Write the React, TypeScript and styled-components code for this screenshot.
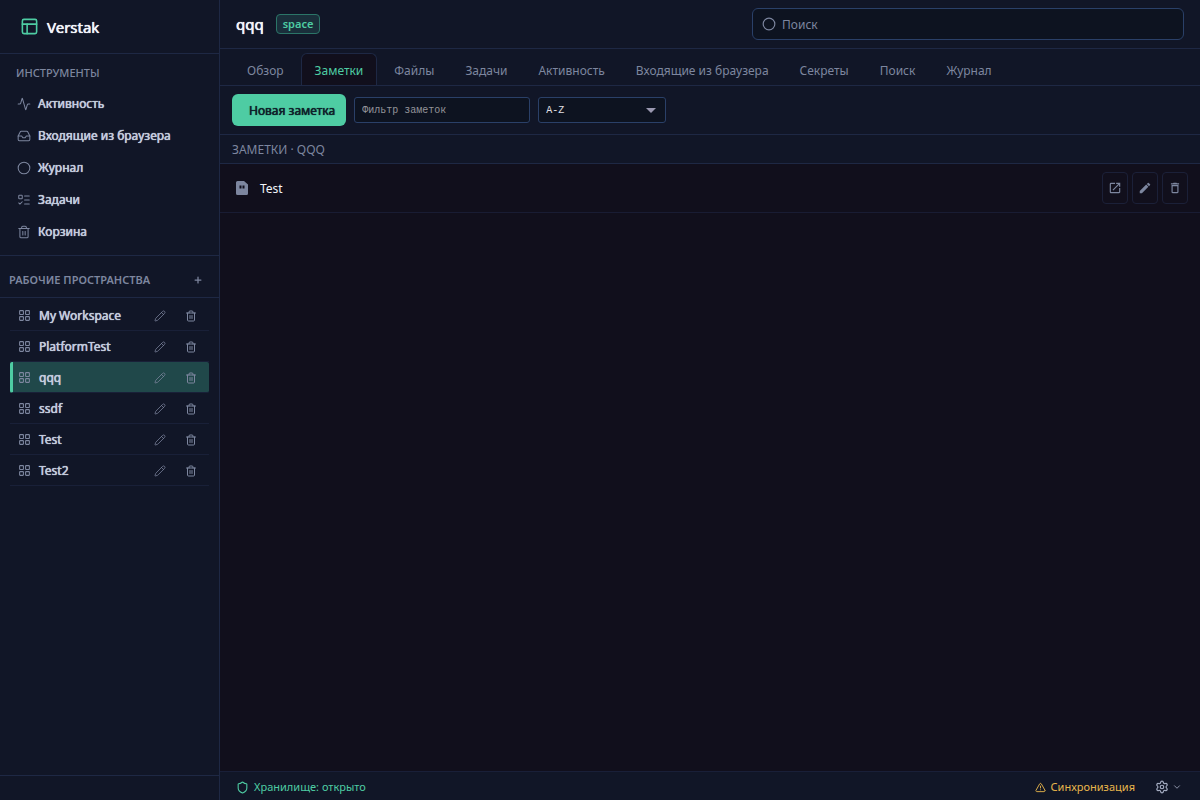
import React from "react";
import styled, { createGlobalStyle, css } from "styled-components";
import {
  Activity, Inbox, Circle, ListTodo, Trash2, LayoutGrid, Pencil, PanelsTopLeft,
  Shield, TriangleAlert, Settings, ChevronDown, Plus,
} from "lucide-react";
import { MdOpenInNew, MdEdit, MdDeleteOutline } from "react-icons/md";

const color = {
  panel: "#111627",
  canvas: "#110f1c",
  field: "#0d1320",
  line: "#1e2844",
  fieldLine: "#2a4068",
  text: "#c3cbdd",
  bright: "#f2f5fa",
  muted: "#7d869f",
  accent: "#4ecca3",
  warn: "#e8b64c",
};

const strong = css`
  font-weight: 400;
  text-shadow: 0 0 0 currentColor, 0 0 1px currentColor;
`;

const GlobalStyle = createGlobalStyle`
  *, *::before, *::after { box-sizing: border-box; }
  body {
    margin: 0;
    background: ${color.canvas};
    color: ${color.text};
    font-family: "Noto Sans", "Open Sans", sans-serif;
    font-size: 12px;
    line-height: 16px;
  }
  button, input, select { font: inherit; color: inherit; margin: 0; }
  ul { list-style: none; margin: 0; padding: 0; }
  h1, h2 { margin: 0; }
`;

const Shell = styled.div`
  display: grid;
  grid-template-columns: 220px minmax(0, 1fr);
  min-height: 100vh;
`;

const Sidebar = styled.aside`
  display: flex;
  flex-direction: column;
  background: ${color.panel};
  border-right: 1px solid ${color.line};
`;

const Brand = styled.div`
  ${strong}
  display: flex;
  align-items: center;
  gap: 8px;
  height: 54px;
  padding: 0 20px;
  border-bottom: 1px solid ${color.line};
  color: ${color.bright};
  font-size: 15px;
  svg { color: ${color.accent}; }
`;

const Tools = styled.nav`
  padding: 10px 0 7px;
  border-bottom: 1px solid ${color.line};
`;

const SectionTitle = styled.h2`
  font-size: 11px;
  font-weight: 600;
  line-height: 18px;
  color: ${color.muted};
  text-transform: uppercase;
`;

const ToolsTitle = styled(SectionTitle)`
  padding: 0 16px;
  margin-bottom: 6px;
  font-weight: 500;
`;

const ToolLink = styled.a`
  ${strong}
  display: flex;
  align-items: center;
  gap: 7px;
  height: 32px;
  padding: 0 17px;
  color: ${color.text};
  text-decoration: none;
  svg { color: ${color.muted}; }
`;

const SpacesHeader = styled.div`
  display: flex;
  align-items: center;
  justify-content: space-between;
  height: 42px;
  padding: 6px 10px 0 9px;
  border-bottom: 1px solid ${color.line};
`;

const GhostButton = styled.button`
  display: grid;
  place-items: center;
  width: 22px;
  height: 22px;
  padding: 0;
  border: 0;
  background: none;
  color: ${color.muted};
`;

const SpaceList = styled.ul`
  flex: 1;
  padding: 2px 10px;
`;

const SpaceRow = styled.li<{ $active: boolean }>`
  display: flex;
  align-items: center;
  gap: 9px;
  height: 31px;
  padding: 1px 7px 0 3px;
  border-bottom: 1px solid #192038;
  ${(p) => p.$active && css`
    padding-left: 0;
    background: #20484a;
    border-left: 3px solid ${color.accent};
    border-radius: 2px;
  `}
`;

const SpaceLink = styled.a`
  ${strong}
  display: flex;
  flex: 1;
  align-items: center;
  gap: 8px;
  padding-left: 5px;
  color: ${color.text};
  text-decoration: none;
  svg { color: ${color.muted}; }
`;

const SidebarFoot = styled.div`
  height: 25px;
  border-top: 1px solid ${color.line};
`;

const Main = styled.main`
  display: flex;
  flex-direction: column;
  min-width: 0;
`;

const TopBar = styled.header`
  display: flex;
  align-items: center;
  gap: 12px;
  height: 49px;
  padding: 0 16px;
  background: ${color.panel};
  border-bottom: 1px solid ${color.line};
`;

const Title = styled.h1`
  ${strong}
  color: ${color.bright};
  font-size: 15px;
  line-height: 20px;
`;

const Badge = styled.span`
  padding: 1px 6px;
  border: 1px solid #2b7568;
  border-radius: 4px;
  background: #1a2f3b;
  color: ${color.accent};
  font-size: 11px;
  font-weight: 600;
`;

const SearchBox = styled.label`
  display: flex;
  flex: 0 1 432px;
  align-items: center;
  gap: 6px;
  height: 32px;
  margin-left: auto;
  padding: 0 9px;
  border: 1px solid ${color.fieldLine};
  border-radius: 6px;
  background: ${color.field};
  color: ${color.muted};
`;

const SearchInput = styled.input`
  flex: 1;
  min-width: 0;
  padding: 1px 0 0;
  border: 0;
  outline: 0;
  background: none;
  &::placeholder { color: ${color.muted}; opacity: 1; }
`;

const Tabs = styled.nav`
  display: flex;
  align-items: flex-end;
  gap: 3px;
  height: 37px;
  padding: 0 13px;
  background: ${color.panel};
  border-bottom: 1px solid ${color.line};
`;

const Tab = styled.button<{ $active: boolean }>`
  height: 32px;
  padding: 2px 13px 0;
  border: 1px solid transparent;
  border-bottom: 0;
  border-radius: 6px 6px 0 0;
  background: none;
  color: ${color.muted};
  white-space: nowrap;
  ${(p) => p.$active && css`
    background: ${color.canvas};
    border-color: ${color.line};
    color: ${color.accent};
  `}
`;

const Toolbar = styled.div`
  display: flex;
  align-items: center;
  gap: 8px;
  height: 49px;
  padding: 0 12px;
  background: ${color.panel};
  border-bottom: 1px solid ${color.line};
`;

const PrimaryButton = styled.button`
  ${strong}
  min-width: 114px;
  height: 32px;
  padding: 2px 11px 0 17px;
  border: 0;
  border-radius: 6px;
  background: ${color.accent};
  color: #10222b;
`;

const field = css`
  height: 26px;
  border: 1px solid ${color.fieldLine};
  border-radius: 3px;
  background: ${color.field};
  font-family: "Liberation Mono", monospace;
  font-size: 10px;
`;

const FilterInput = styled.input`
  ${field}
  width: 176px;
  padding: 0 7px;
  &::placeholder { color: #94949a; opacity: 1; }
`;

const SortWrap = styled.div`
  display: grid;
  align-items: center;
  width: 128px;
  > * { grid-area: 1 / 1; }
  > svg { justify-self: end; margin-right: 10px; pointer-events: none; }
`;

const SortSelect = styled.select`
  ${field}
  width: 100%;
  padding: 2px 7px 0;
  appearance: none;
  color: #e0e0e6;
`;

const ListTitle = styled.h2`
  height: 29px;
  padding: 0 12px;
  background: ${color.panel};
  border-bottom: 1px solid ${color.line};
  color: ${color.muted};
  font-size: 12px;
  font-weight: 400;
  line-height: 29px;
  text-transform: uppercase;
`;

const Notes = styled.ul`
  flex: 1;
`;

const NoteRow = styled.li`
  display: flex;
  align-items: center;
  gap: 4px;
  height: 49px;
  padding: 0 12px 0 16px;
  border-bottom: 1px solid #191c33;
  > svg { color: ${color.muted}; }
`;

const NoteName = styled.a`
  flex: 1;
  padding: 2px 0 0 8px;
  color: ${color.bright};
  text-decoration: none;
`;

const NoteAction = styled.button`
  display: grid;
  place-items: center;
  width: 26px;
  height: 32px;
  padding: 0;
  border: 1px solid #1b2038;
  border-radius: 4px;
  background: none;
  color: ${color.muted};
`;

const StatusBar = styled.footer`
  display: flex;
  align-items: center;
  height: 29px;
  padding: 2px 18px 0 16px;
  background: ${color.panel};
  border-top: 1px solid #191f38;
  font-size: 11px;
`;

const Status = styled.span<{ $tone: string }>`
  display: flex;
  align-items: center;
  gap: 5px;
  color: ${(p) => p.$tone};
`;

const SettingsButton = styled.button`
  display: flex;
  align-items: center;
  gap: 3px;
  margin-left: 20px;
  padding: 0;
  border: 0;
  background: none;
  color: #a3abc0;
`;

const Spacer = styled.div`
  flex: 1;
`;

const NoteIcon = () => (
  <svg width="12" height="14" viewBox="0 0 12 14" aria-hidden="true">
    <path fill="currentColor" fillRule="evenodd" d="M1.500 0H8l4 3.500V12.500A1.500 1.500 0 0 1 10.500 14H1.500A1.500 1.500 0 0 1 0 12.500V1.500A1.500 1.500 0 0 1 1.500 0ZM3.500 4.500V7.500H5.500V4.500ZM6.500 4.500V7.500H8.500V4.500Z" />
  </svg>
);

const Arrow = () => (
  <svg width="10" height="5" viewBox="0 0 10 5" aria-hidden="true">
    <path fill="#9a98b0" d="M0 0H10L5 5Z" />
  </svg>
);

const tools = [
  { name: "Активность", Icon: Activity },
  { name: "Входящие из браузера", Icon: Inbox },
  { name: "Журнал", Icon: Circle },
  { name: "Задачи", Icon: ListTodo },
  { name: "Корзина", Icon: Trash2 },
];
const spaces = ["My Workspace", "PlatformTest", "qqq", "ssdf", "Test", "Test2"];
const tabs = ["Обзор", "Заметки", "Файлы", "Задачи", "Активность", "Входящие из браузера", "Секреты", "Поиск", "Журнал"];

export default function App() {
  return (
    <Shell>
      <GlobalStyle />
      <Sidebar>
        <Brand><PanelsTopLeft size={19} strokeWidth={2} />Verstak</Brand>
        <Tools>
          <ToolsTitle>Инструменты</ToolsTitle>
          {tools.map(({ name, Icon }) => (
            <ToolLink href="#" key={name}><Icon size={14} strokeWidth={1.75} />{name}</ToolLink>
          ))}
        </Tools>
        <SpacesHeader>
          <SectionTitle>Рабочие пространства</SectionTitle>
          <GhostButton aria-label="Добавить"><Plus size={10} strokeWidth={3} /></GhostButton>
        </SpacesHeader>
        <SpaceList>
          {spaces.map((name) => (
            <SpaceRow key={name} $active={name === "qqq"}>
              <SpaceLink href="#"><LayoutGrid size={13} strokeWidth={2} />{name}</SpaceLink>
              <GhostButton aria-label="Переименовать"><Pencil size={12} strokeWidth={1.5} /></GhostButton>
              <GhostButton aria-label="Удалить"><Trash2 size={12} strokeWidth={2} /></GhostButton>
            </SpaceRow>
          ))}
        </SpaceList>
        <SidebarFoot />
      </Sidebar>
      <Main>
        <TopBar>
          <Title>qqq</Title>
          <Badge>space</Badge>
          <SearchBox>
            <Circle size={14} strokeWidth={2} />
            <SearchInput type="search" placeholder="Поиск" aria-label="Поиск" />
          </SearchBox>
        </TopBar>
        <Tabs>
          {tabs.map((name) => <Tab key={name} $active={name === "Заметки"}>{name}</Tab>)}
        </Tabs>
        <Toolbar>
          <PrimaryButton>Новая заметка</PrimaryButton>
          <FilterInput placeholder="Фильтр заметок" aria-label="Фильтр заметок" />
          <SortWrap>
            <SortSelect aria-label="Сортировка"><option>A-Z</option></SortSelect>
            <Arrow />
          </SortWrap>
        </Toolbar>
        <ListTitle>Заметки · qqq</ListTitle>
        <Notes>
          <NoteRow>
            <NoteIcon />
            <NoteName href="#">Test</NoteName>
            <NoteAction aria-label="Открыть"><MdOpenInNew size={14} /></NoteAction>
            <NoteAction aria-label="Изменить"><MdEdit size={14} /></NoteAction>
            <NoteAction aria-label="Удалить"><MdDeleteOutline size={14} /></NoteAction>
          </NoteRow>
        </Notes>
        <StatusBar>
          <Status $tone={color.accent}><Shield size={13} />Хранилище: открыто</Status>
          <Spacer />
          <Status $tone={color.warn}><TriangleAlert size={11} />Синхронизация</Status>
          <SettingsButton aria-label="Настройки"><Settings size={14} /><ChevronDown size={10} /></SettingsButton>
        </StatusBar>
      </Main>
    </Shell>
  );
}
